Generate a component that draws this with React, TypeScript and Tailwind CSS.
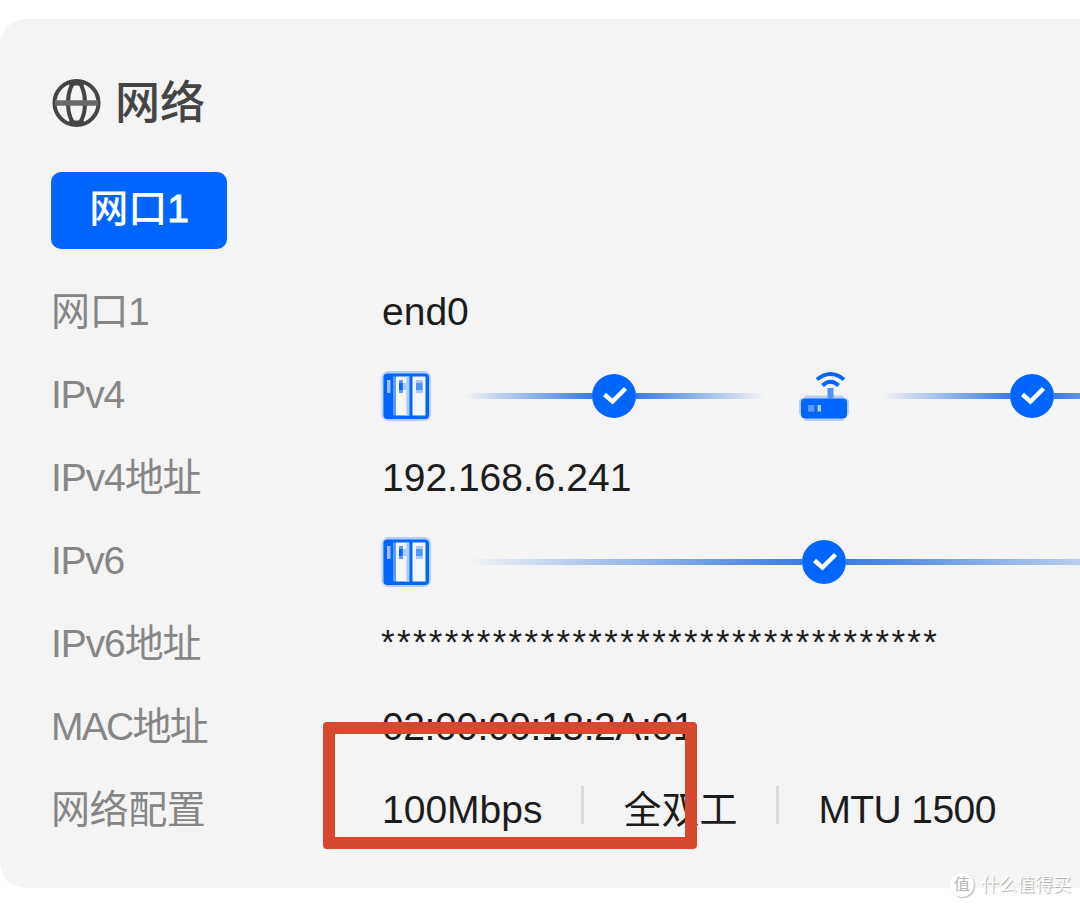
import type { ReactNode } from 'react';

function GlobeIcon() {
  return (
    <svg className="w-[50px] h-[50px] shrink-0" viewBox="0 0 50 50" fill="none" stroke="#454545">
      <circle cx="25.5" cy="25" r="22" strokeWidth="4" />
      <ellipse cx="25.5" cy="25" rx="8.5" ry="21" strokeWidth="4" />
      <path d="M4 25H47" strokeWidth="5.5" stroke="#6a6a6a" />
      <path d="M18 5H33M18 45H33" strokeWidth="5" />
    </svg>
  );
}

function NasIcon() {
  return (
    <svg className="w-[50px] h-[52px] shrink-0" viewBox="0 0 50 52">
      <rect x="0.5" y="1" width="49.5" height="50" rx="7" fill="#b3d0fb" />
      <rect x="2.5" y="3.5" width="45.5" height="45.5" rx="4" fill="#0066ff" />
      <rect x="12" y="6.5" width="3" height="39" fill="#5b9bfd" />
      <rect x="15" y="6.5" width="13" height="39" fill="#f4f5f6" />
      <rect x="25.5" y="6.5" width="3" height="39" fill="#a9cafb" />
      <rect x="31.5" y="6.5" width="13" height="39" fill="#f4f5f6" />
      <rect x="6" y="10" width="3.5" height="13" fill="#9ac1fc" />
      <rect x="18" y="10" width="4" height="13" fill="#5b9bfd" />
      <rect x="18" y="13" width="3.5" height="7" fill="#0066ff" />
      <rect x="22" y="13" width="3.5" height="7" fill="#a9cafb" />
      <rect x="35" y="10" width="7" height="13" fill="#a9cafb" />
      <rect x="35" y="13" width="6.5" height="7" fill="#4f95fd" />
    </svg>
  );
}

function RouterIcon() {
  return (
    <svg className="w-[50px] h-[52px] shrink-0" viewBox="0 0 50 52">
      <rect x="0" y="28" width="50" height="18" rx="4" fill="#b3d0fb" />
      <rect x="5" y="25.5" width="40" height="25.5" rx="3" fill="#b3d0fb" />
      <rect x="2" y="28.5" width="46" height="20" rx="4" fill="#0066ff" />
      <rect x="28.5" y="18" width="6" height="11" fill="#4d93fd" />
      <path d="M18 9.500Q31.500 -1.500 45 9.500" fill="none" stroke="#0066ff" strokeWidth="4" />
      <path d="M23.500 15.500Q31.500 8 39.500 15.500" fill="none" stroke="#0066ff" strokeWidth="4" />
      <rect x="9" y="35" width="6.5" height="6.5" fill="#5b9bfd" />
      <rect x="18.5" y="35" width="3.5" height="6.5" fill="#b3d0fb" />
    </svg>
  );
}

function CheckIcon() {
  return (
    <svg className="w-11 h-11 shrink-0" viewBox="0 0 44 44">
      <circle cx="22" cy="22" r="22" fill="#0066ff" />
      <path d="M12.500 20.500L20.500 27.500L33.500 14.500" fill="none" stroke="#fff" strokeWidth="4.4" />
    </svg>
  );
}

function Link({ className }: { className: string }) {
  return (
    <div className={`flex shrink-0 items-center ${className}`}>
      <div className="h-1.5 flex-1 bg-gradient-to-r from-[#3a7cdf]/0 to-[#3a7cdf]" />
      <CheckIcon />
      <div className="h-1.5 flex-1 bg-gradient-to-l from-[#3a7cdf]/0 to-[#3a7cdf]" />
    </div>
  );
}

function Row({ label, children }: { label: ReactNode; children: ReactNode }) {
  return (
    <div className="flex h-[83px] items-center whitespace-nowrap">
      <div className="w-[330px] shrink-0 text-[#868686]">{label}</div>
      {children}
    </div>
  );
}

export default function App() {
  return (
    <div className="relative h-[907px] w-[1080px] overflow-hidden bg-white pt-[19px] font-['Liberation_Sans','Noto_Sans_CJK_SC',sans-serif] text-[39px] leading-[50px] text-[#1c1c1c]">
      <section className="h-[869px] rounded-l-[26px] bg-[#f4f4f4] pt-[57px] pl-[51px]">
        <header className="flex h-[54px] items-center gap-[14px] text-[#454545]">
          <GlobeIcon />
          <h1 className="pt-0.5 text-[45px] font-medium">网络</h1>
        </header>

        <button className="mt-[42px] flex h-[77px] w-[176px] items-center justify-center rounded-[10px] bg-[#0066ff] pb-[3px] font-medium text-white">
          网口<span className="[-webkit-text-stroke:1px_white]">1</span>
        </button>

        <div className="mt-[21px]">
          <Row label={<span className="tracking-[-0.5px]">网口1</span>}>
            <span className="pl-px">end0</span>
          </Row>
          <Row label={<span className="tracking-[-1.3px]">IPv4</span>}>
            <div className="flex items-center pt-0.5">
              <NasIcon />
              <Link className="mr-[35px] ml-[33px] w-[300px]" />
              <RouterIcon />
              <Link className="ml-[33px] w-[300px]" />
            </div>
          </Row>
          <Row label={<span className="tracking-[-1.1px]">IPv4地址</span>}>
            <span className="pl-px">192.168.6.241</span>
          </Row>
          <Row label={<span className="tracking-[-1.3px]">IPv6</span>}>
            <div className="flex items-center pt-0.5">
              <NasIcon />
              <Link className="ml-[33px] w-[720px]" />
            </div>
          </Row>
          <Row label={<span className="tracking-[-1.1px]">IPv6地址</span>}>
            <span className="pb-1 text-[35px] tracking-[2.33px]">***********************************</span>
          </Row>
          <Row label={<span className="tracking-[-1.7px]">MAC地址</span>}>
            <span className="pl-px tracking-[-0.4px]">02:00:00:18:2A:01</span>
          </Row>
          <Row label={<span className="tracking-[-0.4px]">网络配置</span>}>
            <span className="pl-px">100Mbps</span>
            <i className="mr-[39px] mb-[9px] ml-[39px] h-[38px] w-[3px] bg-[#dadada]" />
            <span className="text-[38px]">全双工</span>
            <i className="mr-[39px] mb-[9px] ml-[39px] h-[38px] w-[3px] bg-[#dadada]" />
            <span className="tracking-[-0.6px]">MTU 1500</span>
          </Row>
        </div>
      </section>

      {/* highlight drawn over the speed row */}
      <div className="absolute top-[722px] left-[323px] h-[127px] w-[374px] rounded-[4px] border-[12px] border-[#d7492f]" />

      <div className="absolute top-[872px] left-[950px] flex h-[26px] items-center gap-[7px] text-[18px] leading-[26px] text-white [text-shadow:1px_1px_1px_#aaa]">
        <span className="flex h-6 w-6 items-center justify-center rounded-full bg-white text-[16px] text-[#b5b5b5] shadow-[1px_1px_1px_#bbb] [text-shadow:none]">
          值
        </span>
        <span>什么值得买</span>
      </div>
    </div>
  );
}
